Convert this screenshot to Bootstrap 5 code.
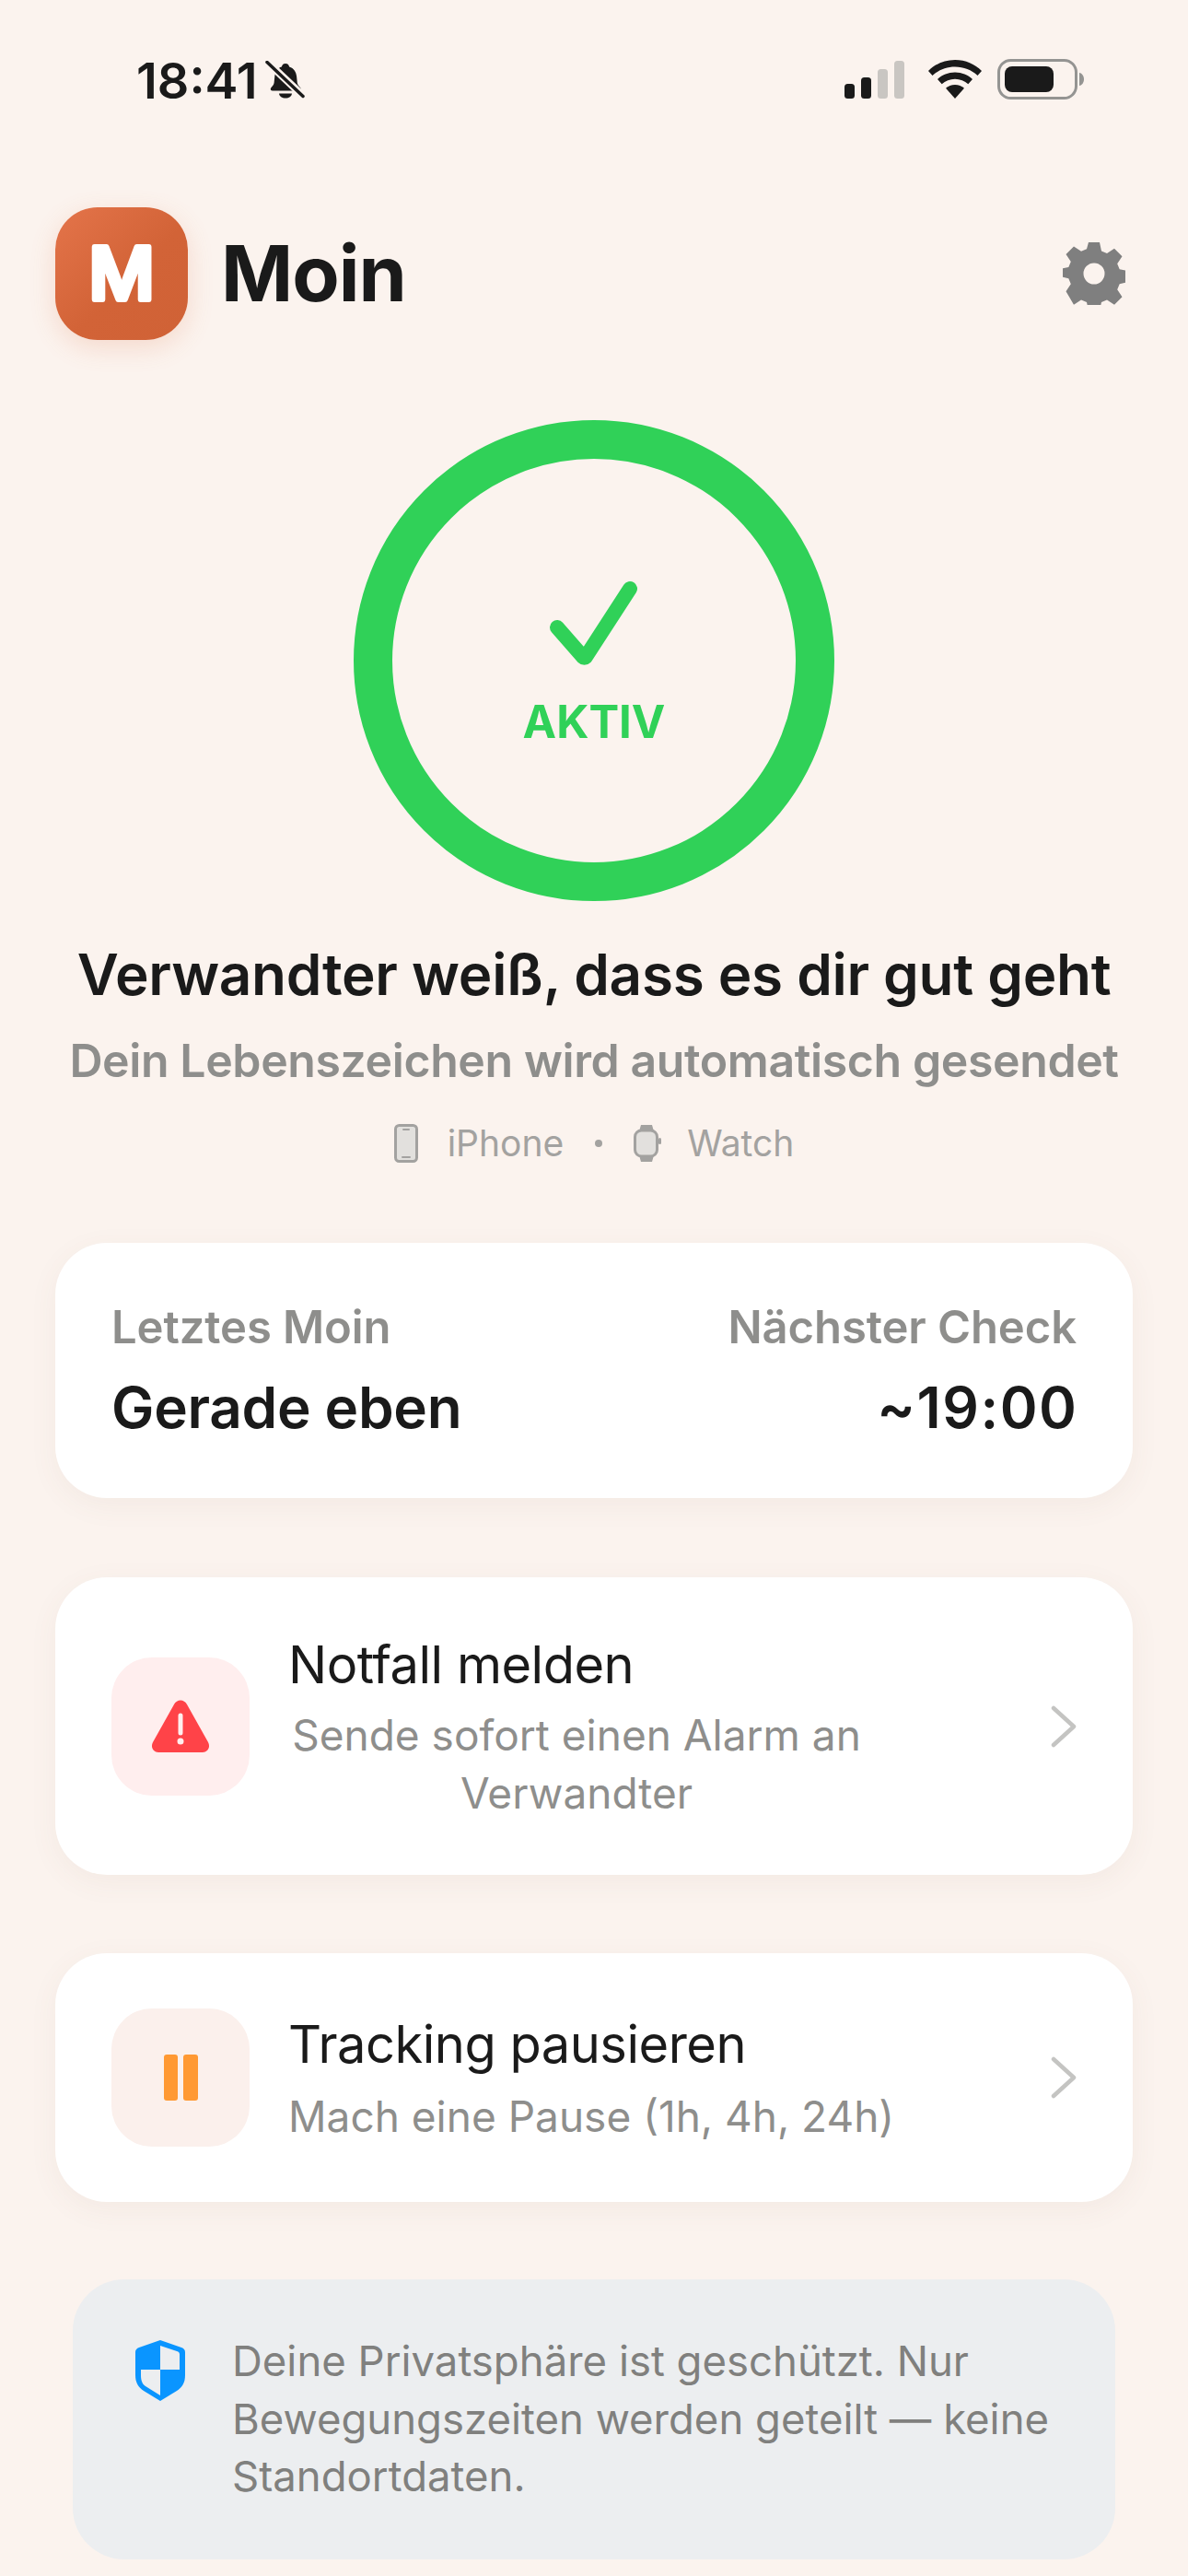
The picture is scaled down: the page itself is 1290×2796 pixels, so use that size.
<!DOCTYPE html>
<html lang="de">
<head>
  <meta charset="UTF-8">
  <title>Moin</title>
  <meta name="viewport" content="width=device-width, initial-scale=1.0">
  <link href="https://cdn.jsdelivr.net/npm/bootstrap@5.3.0/dist/css/bootstrap.min.css" rel="stylesheet">
  <style>
    body {
      background: #fbf3ee;
      font-family: Inter, "Liberation Sans", sans-serif;
      color: #1a1a1a;
      width: 1290px;
      height: 2796px;
      overflow: hidden;
    }
    .status-bar { height: 225px; padding: 62px 113px 0 148px; align-items: flex-start; }
    .status-time { font-size: 54px; line-height: 52px; font-weight: 600; letter-spacing: 0; }
    .app-head { padding: 0 68px 0 60px; }
    .app-icon {
      width: 144px; height: 144px; border-radius: 46px;
      background: linear-gradient(135deg, #e4744a 0%, #d26337 55%, #d06236 100%);
      box-shadow: 0 8px 28px rgba(226,116,70,.2);
    }
    .app-letter { font-size: 78px; font-weight: 500; font-family: Inter, sans-serif; }
    .app-name { font-size: 84px; line-height: 1; font-weight: 700; letter-spacing: -1px; margin-left: 36px; }
    .status-ring {
      width: 522px; height: 522px; margin: 87px auto 0; padding-bottom: 1px;
      border: 42px solid #30d158; border-radius: 50%;
      color: #30d158;
    }
    .status-ring svg { margin-top: 5px; }
    .ring-label { font-size: 49px; line-height: 1; font-weight: 700; margin-top: 33px; }
    .headline { font-size: 62px; line-height: 80px; font-weight: 600; margin: 40px 0 19px; letter-spacing: -.3px; }
    .subline { font-size: 50px; line-height: 68px; font-weight: 600; color: #8e8e8c; margin: 0; letter-spacing: -.4px; }
    .device-row { height: 50px; margin-top: 31px; color: #a3a2a0; font-size: 39px; gap: 21px; }
    .device-dot { width: 8px; height: 8px; border-radius: 50%; background: #a3a2a0; margin: 0 13px; }
    .phone-name { margin-left: 11px; }
    .watch-name { margin-left: 7px; }
    .info-card {
      background: #fff; border: 0; border-radius: 56px; margin: 0 60px;
      box-shadow: 0 8px 32px rgba(120,90,70,.06);
    }
    .last-card { margin-top: 83px; height: 277px; padding: 61px 61px 0; }
    .mini-label { font-size: 49px; line-height: 62px; font-weight: 600; color: #8e8e8c; letter-spacing: -.1px; }
    .mini-value { font-size: 62px; line-height: 80px; font-weight: 600; margin-top: 16px; letter-spacing: -.3px; }
    .mini-value-time { letter-spacing: 1.500px; margin-right: -1.500px; }
    .action-card { padding: 0 61px; }
    .alarm-card { margin-top: 86px; height: 323px; }
    .pause-card { margin-top: 85px; height: 270px; }
    .icon-box { width: 150px; height: 150px; border-radius: 44px; flex: none; margin-right: 42px; }
    .icon-red { background: #ffeeee; }
    .icon-orange { background: #fbf0ec; }
    .action-title { font-size: 56px; line-height: 76px; font-weight: 400; letter-spacing: -.5px; }
    .action-sub { font-size: 46px; line-height: 63px; color: #8e8e8c; }
    .alarm-sub { width: 626px; margin-top: 7px; }
    .pause-sub { margin-top: 9px; }
    .chevron { flex: none; margin-left: auto; }
    .privacy-box {
      margin: 84px 79px 0; height: 304px; padding: 58px 60px 0 68px;
      background: #eceef0; border-radius: 56px;
      font-size: 45.500px; line-height: 62.500px; color: #80807e;
    }
    .privacy-box svg { flex: none; margin: 8px 51px 0 0; }
  </style>
</head>
<body>
  <div class="status-bar d-flex justify-content-between">
    <div class="d-flex align-items-center">
      <span class="status-time">18:41</span>
      <svg width="44" height="44" viewBox="0 0 44 44" class="ms-2">
        <path d="M22 3c2.600 0 3.800 1.700 4.100 3.500 5 1.500 7.500 5.700 8 10.500l.7 7c.3 2.300 2.200 3.700 3.700 5.700.6 1.500-.2 2.800-2 2.800H8c-1.800 0-2.700-1.300-2-2.800 1.400-2 3.300-3.400 3.600-5.700l.7-7c.5-4.800 3-9.500 7.600-10.500C18.200 4.700 19.400 3 22 3z" fill="#1a1a1a"/>
        <path d="M15 35.500h14c-.5 3.200-3.200 5-7 5s-6.500-1.800-7-5z" fill="#1a1a1a"/>
        <path d="M3 2 41 38" stroke="#fbf3ee" stroke-width="8"/>
        <path d="M2 1.500 41 38.500" stroke="#1a1a1a" stroke-width="3.500" stroke-linecap="round"/>
      </svg>
    </div>
    <div class="d-flex align-items-center gap-3" style="padding-top: 2px">
      <svg width="66" height="42" viewBox="0 0 66 42">
        <rect x="0" y="26" width="11" height="16" rx="3.500" fill="#1a1a1a"/>
        <rect x="18" y="19" width="11" height="23" rx="3.500" fill="#1a1a1a"/>
        <rect x="36" y="10" width="11" height="32" rx="3.500" fill="#c9c6c2"/>
        <rect x="54" y="1" width="11" height="41" rx="3.500" fill="#c9c6c2"/>
      </svg>
      <svg width="60" height="44" viewBox="0 0 60 44" class="ms-2">
        <path d="M30 1C18.500 1 8.500 5.500 1 13l4.500 5C12 12 20.500 8.500 30 8.500S48 12 54.500 18l4.500-5C51.500 5.500 41.500 1 30 1z" fill="#1a1a1a"/>
        <path d="M30 14.500c-7.500 0-14 2.800-19 7.500l4.700 5.200c3.800-3.400 8.800-5.500 14.300-5.500s10.500 2.100 14.300 5.500L49 22c-5-4.700-11.500-7.500-19-7.500z" fill="#1a1a1a"/>
        <path d="M30 28c-4 0-7.400 1.400-10 3.800L30 43l10-11.200C37.400 29.400 34 28 30 28z" fill="#1a1a1a"/>
      </svg>
      <svg width="94" height="44" viewBox="0 0 94 44">
        <rect x="1.500" y="1.500" width="84" height="41" rx="13" fill="none" stroke="#949492" stroke-width="3"/>
        <rect x="8" y="8" width="53" height="28" rx="8" fill="#1a1a1a"/>
        <path d="M89 15c3 .5 5 3.500 5 7s-2 6.500-5 7z" fill="#949492"/>
      </svg>
    </div>
  </div>

  <div class="app-head d-flex align-items-center justify-content-between">
    <div class="d-flex align-items-center">
      <div class="app-icon">
        <svg width="144" height="144" viewBox="0 0 144 144">
          <text class="app-letter" x="72" y="100" text-anchor="middle" fill="#fff" stroke="#fff" stroke-width="6" stroke-linejoin="round">M</text>
        </svg>
      </div>
      <span class="app-name">Moin</span>
    </div>
    <svg width="68" height="68" viewBox="0 0 68 68">
      <path fill="#7f7f7f" fill-rule="evenodd" d="M28 0h12l2 9.500 6 2.500 8-5.300 8.500 8.500-5.300 8 2.500 6 9.500 2v12l-9.500 2-2.500 6 5.300 8-8.500 8.500-8-5.300-6 2.500-2 9.500H28l-2-9.500-6-2.500-8 5.300L3.500 53.200l5.300-8-2.500-6L-3 37V29l9.300-2 2.500-6-5.300-8L12 4.500l8 5.300 6-2.500z M34 22.500a11.500 11.500 0 1 0 0 23 11.500 11.500 0 0 0 0-23z"/>
    </svg>
  </div>

  <div class="status-ring d-flex flex-column align-items-center justify-content-center">
    <svg width="98" height="96" viewBox="0 0 98 96">
      <path d="M9 51 37 83q1.500 1.500 3 0L88 9" fill="none" stroke="#30d158" stroke-width="16" stroke-linecap="round" stroke-linejoin="round"/>
    </svg>
    <div class="ring-label">AKTIV</div>
  </div>

  <div class="text-center">
    <h1 class="headline">Verwandter weiß, dass es dir gut geht</h1>
    <p class="subline">Dein Lebenszeichen wird automatisch gesendet</p>
    <div class="device-row d-flex align-items-center justify-content-center">
      <svg width="26" height="42" viewBox="0 0 26 42">
        <rect x="1.500" y="1.500" width="23" height="39" rx="4" fill="#e2e0dd" stroke="#a3a2a0" stroke-width="3"/>
        <rect x="9" y="5" width="8" height="2" rx="1" fill="#a3a2a0"/>
        <rect x="8" y="35" width="10" height="2" rx="1" fill="#a3a2a0"/>
      </svg>
      <span class="phone-name">iPhone</span>
      <span class="device-dot"></span>
      <svg width="30" height="42" viewBox="0 0 30 42">
        <path d="M6 8 8 1h12l2 7zM6 34l2 7h12l2-7z" fill="#a3a2a0"/>
        <rect x="1.500" y="7" width="24" height="28" rx="7" fill="#e2e0dd" stroke="#a3a2a0" stroke-width="3"/>
        <rect x="27" y="15" width="3" height="7" rx="1.500" fill="#a3a2a0"/>
      </svg>
      <span class="watch-name">Watch</span>
    </div>
  </div>

  <div class="card info-card last-card">
    <div class="d-flex justify-content-between">
      <div>
        <div class="mini-label">Letztes Moin</div>
        <div class="mini-value">Gerade eben</div>
      </div>
      <div class="text-end">
        <div class="mini-label">Nächster Check</div>
        <div class="mini-value mini-value-time">~19:00</div>
      </div>
    </div>
  </div>

  <div class="card info-card action-card alarm-card flex-row align-items-center">
    <div class="icon-box icon-red d-flex align-items-center justify-content-center">
      <svg width="64" height="58" viewBox="0 0 64 58">
        <path fill="#ff4348" fill-rule="evenodd" d="M25 5c3-6 11-6 14 0l23 41c3 6-1 11-6 11H8c-5 0-9-5-6-11z M29.500 17v19a2.500 2.500 0 0 0 5 0V17a2.500 2.500 0 0 0-5 0z M32 41.500a3.500 3.500 0 1 0 0 7 3.500 3.500 0 0 0 0-7z"/>
      </svg>
    </div>
    <div class="flex-grow-1">
      <div class="action-title">Notfall melden</div>
      <div class="action-sub text-center alarm-sub">Sende sofort einen Alarm an Verwandter</div>
    </div>
    <svg class="chevron ms-4" width="28" height="46" viewBox="0 0 28 46">
      <path d="M3 3 25 23 3 43" fill="none" stroke="#c4c4c2" stroke-width="4.500" stroke-linecap="round" stroke-linejoin="round"/>
    </svg>
  </div>

  <div class="card info-card action-card pause-card flex-row align-items-center">
    <div class="icon-box icon-orange d-flex align-items-center justify-content-center gap-2">
      <svg width="37" height="50" viewBox="0 0 37 50">
        <rect x="0" y="0" width="15" height="50" rx="3" fill="#ff9933"/>
        <rect x="21" y="0" width="16" height="50" rx="3" fill="#ff9933"/>
      </svg>
    </div>
    <div class="flex-grow-1">
      <div class="action-title">Tracking pausieren</div>
      <div class="action-sub pause-sub">Mach eine Pause (1h, 4h, 24h)</div>
    </div>
    <svg class="chevron ms-4" width="28" height="46" viewBox="0 0 28 46">
      <path d="M3 3 25 23 3 43" fill="none" stroke="#c4c4c2" stroke-width="4.500" stroke-linecap="round" stroke-linejoin="round"/>
    </svg>
  </div>

  <div class="privacy-box d-flex">
    <svg width="54" height="66" viewBox="0 0 54 66">
      <path fill="#0a95ff" d="M27 0 50 8c2.500 1 4 2.500 4 5v25c0 8-3 13-9 17L27 66 9 55c-6-4-9-9-9-17V13c0-2.500 1.500-4 4-5z"/>
      <path fill="#eceef0" d="M27 6 45 12c2 .7 3 1.500 3 3.500V32H27zM6 32h21v28L11 50c-3.500-2.500-5-6-5-12z"/>
    </svg>
    <div>Deine Privatsphäre ist geschützt. Nur Bewegungszeiten werden geteilt — keine Standortdaten.</div>
  </div>
</body>
</html>
